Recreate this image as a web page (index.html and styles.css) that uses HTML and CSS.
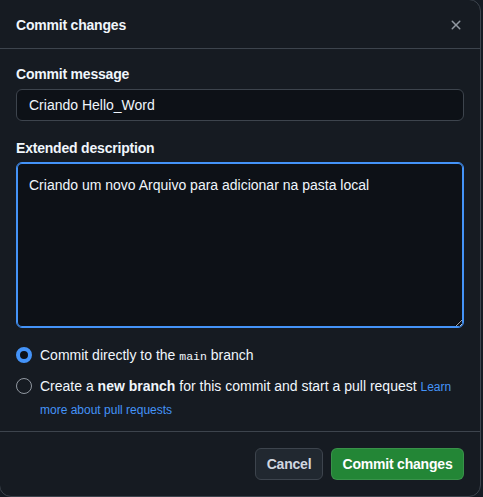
FILE: index.html
```html
<!DOCTYPE html>
<html lang="en">
<head>
<meta charset="utf-8">
<title>Commit changes</title>
<link rel="stylesheet" href="styles.css">
</head>
<body>
<div class="dialog">
  <header class="dialog-header">
    <h1 class="dialog-title">Commit changes</h1>
    <button class="close-btn" aria-label="Close">
      <svg width="16" height="16" viewBox="0 0 16 16" fill="currentColor"><path d="M3.72 3.72a.75.75 0 0 1 1.06 0L8 6.94l3.22-3.22a.749.749 0 0 1 1.275.326.749.749 0 0 1-.215.734L9.06 8l3.22 3.22a.749.749 0 0 1-.326 1.275.749.749 0 0 1-.734-.215L8 9.06l-3.22 3.22a.751.751 0 0 1-1.042-.018.751.751 0 0 1-.018-1.042L6.94 8 3.72 4.78a.75.75 0 0 1 0-1.06Z"/></svg>
    </button>
  </header>
  <div class="dialog-body">
    <label class="field-label" for="msg">Commit message</label>
    <input id="msg" class="text-input" type="text" value="Criando Hello_Word">
    <label class="field-label second" for="desc">Extended description</label>
    <textarea id="desc" class="text-area">Criando um novo Arquivo para adicionar na pasta local</textarea>
    <div class="radios">
      <div class="radio-row">
        <span class="radio checked"></span>
        <span class="radio-text">Commit directly to the <code class="branch">main</code> branch</span>
      </div>
      <div class="radio-row">
        <span class="radio"></span>
        <span class="radio-text wrap">Create a <strong>new branch</strong> for this commit and start a pull request <a class="link" href="#">Learn</a><br><a class="link" href="#">more about pull requests</a></span>
      </div>
    </div>
  </div>
  <footer class="dialog-footer">
    <button class="btn btn-cancel">Cancel</button>
    <button class="btn btn-primary">Commit changes</button>
  </footer>
</div>
</body>
</html>
```
FILE: styles.css
```css
* { box-sizing: border-box; }
html, body {
  margin: 0;
  padding: 0;
  background: #151b23;
  height: 100%;
  overflow: hidden;
}
body {
  font-family: "Liberation Sans", Arial, sans-serif;
  font-size: 14px;
  color: #f0f6fc;
}
.dialog {
  width: 482px;
  height: 498px;
  margin: -1px 0 0 -1px;
  background: #161b22;
  border: 1px solid #3d444d;
  border-radius: 0 12px 12px 12px;
  display: flex;
  flex-direction: column;
}
.dialog-header {
  height: 49px;
  display: flex;
  align-items: center;
  justify-content: space-between;
  padding: 1px 16px 0 16px;
  border-bottom: 1px solid #3d444d;
  flex-shrink: 0;
}
.dialog-title {
  margin: 0;
  font-size: 14px;
  font-weight: 700;
  line-height: 20px;
  color: #f0f6fc;
  letter-spacing: -0.2px;
}
.close-btn {
  background: none;
  border: 0;
  padding: 8px;
  margin-right: -8px;
  color: #9198a1;
  display: flex;
  cursor: pointer;
}
.dialog-body {
  padding: 15px 16px 0 16px;
  flex: 1;
  display: flex;
  flex-direction: column;
}
.field-label {
  display: block;
  font-weight: 700;
  line-height: 20px;
  margin-bottom: 5px;
  letter-spacing: -0.2px;
}
.field-label.second {
  margin-top: 17px;
  margin-bottom: 4px;
}
.text-input, .text-area {
  font-family: inherit;
  font-size: 14px;
  color: #f0f6fc;
  background: #0d1117;
  border: 1px solid #3d444d;
  border-radius: 6px;
  outline: none;
  width: 448px;
}
.text-input {
  height: 32px;
  padding: 0 12px;
  line-height: 20px;
}
.text-area {
  height: 166px;
  padding: 12px;
  line-height: 20px;
  resize: vertical;
  border-color: #4493f8;
  box-shadow: inset 0 0 0 1px #4493f8;
}
.radios {
  margin-top: 17px;
  display: flex;
  flex-direction: column;
  gap: 9px;
}
.radio-row {
  display: flex;
  align-items: flex-start;
  gap: 8px;
}
.radio {
  width: 16px;
  height: 16px;
  border-radius: 50%;
  border: 1px solid #9198a1;
  flex-shrink: 0;
  margin-top: 2px;
}
.radio.checked {
  border: 4px solid #4493f8;
  background: #0d1117;
}
.radio-text {
  line-height: 20px;
  color: #f0f6fc;
}
.radio-text.wrap {
  line-height: 22px;
  margin-top: -1px;
}
.branch {
  font-family: "Liberation Mono", monospace;
  font-size: 11.5px;
}
.link {
  color: #4493f8;
  text-decoration: none;
  font-size: 12px;
}
.dialog-footer {
  border-top: 1px solid #3d444d;
  padding: 16px;
  display: flex;
  justify-content: flex-end;
  gap: 8px;
  flex-shrink: 0;
}
.btn {
  height: 32px;
  border-radius: 6px;
  font-family: inherit;
  font-size: 14px;
  font-weight: 700;
  padding: 0 6px;
  white-space: nowrap;
  letter-spacing: -0.2px;
  cursor: pointer;
}
.btn-cancel {
  width: 68px;
  background: #212830;
  border: 1px solid #3d444d;
  color: #d1d7e0;
}
.btn-primary {
  width: 133px;
  background: #238636;
  border: 1px solid rgba(255,255,255,0.1);
  color: #ffffff;
}
```
